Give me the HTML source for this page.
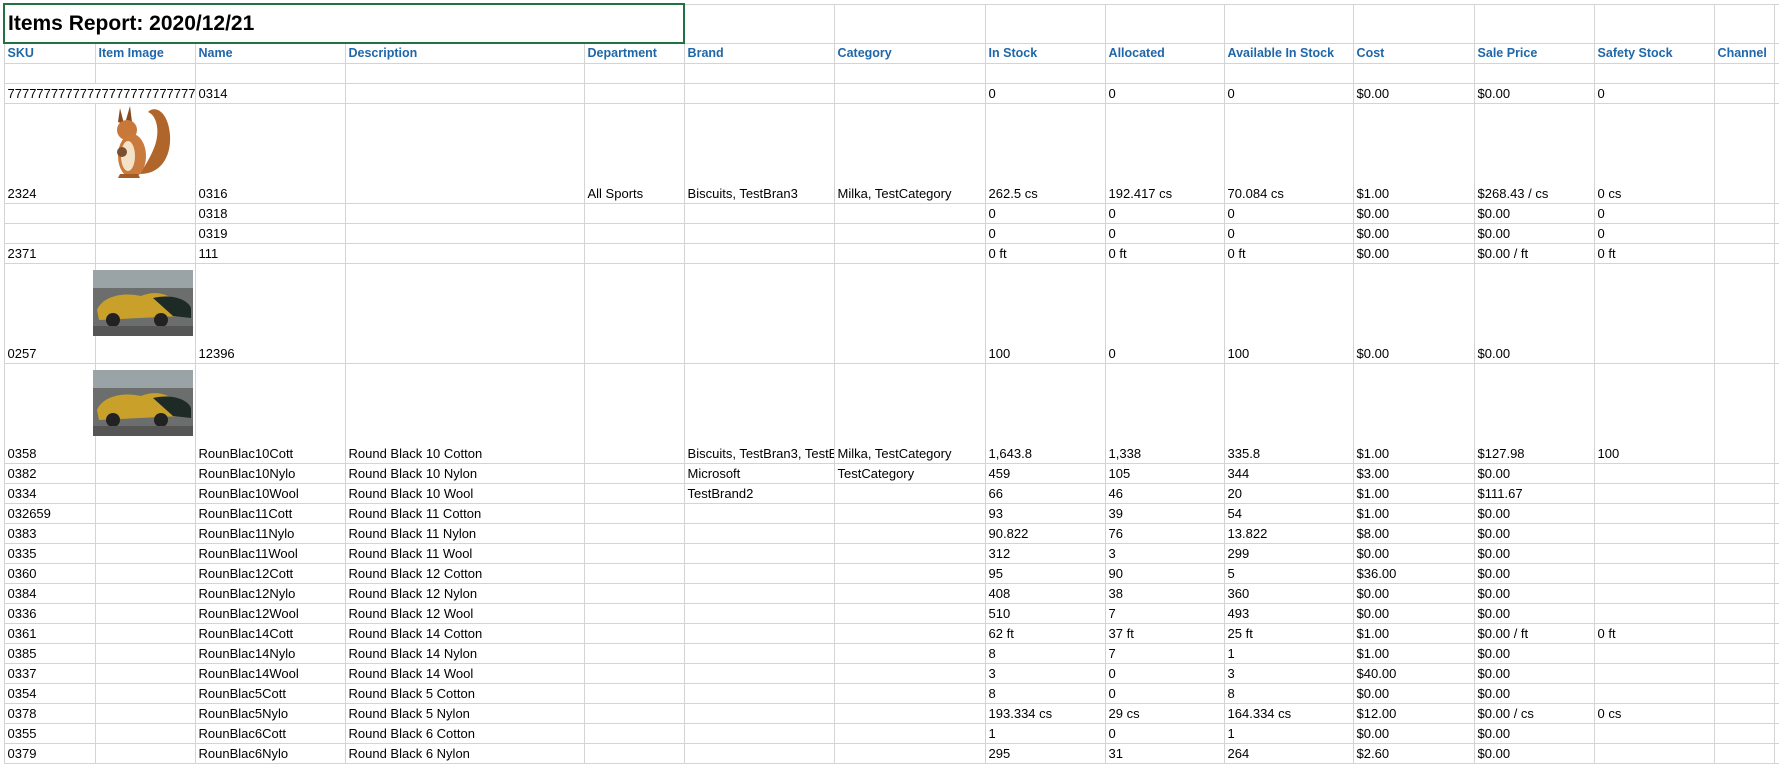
<!DOCTYPE html>
<html><head><meta charset="utf-8"><style>
html,body{margin:0;padding:0;background:#fff;width:1779px;height:759px;overflow:hidden}
table{position:absolute;left:3px;top:3px;width:1780px;border-collapse:collapse;table-layout:fixed;font-family:"Liberation Sans",sans-serif;font-size:13px;color:#000}
td{border:1px solid #d4d4d4;padding:0 0 2px 3px;height:17px;vertical-align:bottom;white-space:nowrap;overflow:hidden;line-height:15px}
tr.h td{color:#1f67a8;font-weight:bold;font-size:12.5px}
tr.t td{height:36px}
tr.b td{height:97px}
.title{border:2px solid #217346!important;font-weight:bold;font-size:21px;vertical-align:middle;padding:0 0 0 3px}
.img{position:absolute}
</style></head><body>
<table>
<colgroup><col style="width:91px"><col style="width:100px"><col style="width:150px"><col style="width:239px"><col style="width:100px"><col style="width:150px"><col style="width:151px"><col style="width:120px"><col style="width:119px"><col style="width:129px"><col style="width:121px"><col style="width:120px"><col style="width:120px"><col style="width:60px"><col style="width:10px"></colgroup>
<tr class="t"><td class="title" colspan="5">Items Report: 2020/12/21</td><td></td><td></td><td></td><td></td><td></td><td></td><td></td><td></td><td></td><td></td></tr>
<tr class="h"><td>SKU</td><td>Item Image</td><td>Name</td><td>Description</td><td>Department</td><td>Brand</td><td>Category</td><td>In Stock</td><td>Allocated</td><td>Available In Stock</td><td>Cost</td><td>Sale Price</td><td>Safety Stock</td><td>Channel</td><td></td></tr>
<tr><td></td><td></td><td></td><td></td><td></td><td></td><td></td><td></td><td></td><td></td><td></td><td></td><td></td><td></td><td></td></tr>
<tr><td colspan="2">77777777777777777777777777777</td><td>0314</td><td></td><td></td><td></td><td></td><td>0</td><td>0</td><td>0</td><td>$0.00</td><td>$0.00</td><td>0</td><td></td><td></td></tr>
<tr class="b"><td>2324</td><td></td><td>0316</td><td></td><td>All Sports</td><td>Biscuits, TestBran3</td><td>Milka, TestCategory</td><td>262.5 cs</td><td>192.417 cs</td><td>70.084 cs</td><td>$1.00</td><td>$268.43 / cs</td><td>0 cs</td><td></td><td></td></tr>
<tr><td></td><td></td><td>0318</td><td></td><td></td><td></td><td></td><td>0</td><td>0</td><td>0</td><td>$0.00</td><td>$0.00</td><td>0</td><td></td><td></td></tr>
<tr><td></td><td></td><td>0319</td><td></td><td></td><td></td><td></td><td>0</td><td>0</td><td>0</td><td>$0.00</td><td>$0.00</td><td>0</td><td></td><td></td></tr>
<tr><td>2371</td><td></td><td>111</td><td></td><td></td><td></td><td></td><td>0 ft</td><td>0 ft</td><td>0 ft</td><td>$0.00</td><td>$0.00 / ft</td><td>0 ft</td><td></td><td></td></tr>
<tr class="b"><td>0257</td><td></td><td>12396</td><td></td><td></td><td></td><td></td><td>100</td><td>0</td><td>100</td><td>$0.00</td><td>$0.00</td><td></td><td></td><td></td></tr>
<tr class="b"><td>0358</td><td></td><td>RounBlac10Cott</td><td>Round Black 10 Cotton</td><td></td><td>Biscuits, TestBran3, TestBrand2</td><td>Milka, TestCategory</td><td>1,643.8</td><td>1,338</td><td>335.8</td><td>$1.00</td><td>$127.98</td><td>100</td><td></td><td></td></tr>
<tr><td>0382</td><td></td><td>RounBlac10Nylo</td><td>Round Black 10 Nylon</td><td></td><td>Microsoft</td><td>TestCategory</td><td>459</td><td>105</td><td>344</td><td>$3.00</td><td>$0.00</td><td></td><td></td><td></td></tr>
<tr><td>0334</td><td></td><td>RounBlac10Wool</td><td>Round Black 10 Wool</td><td></td><td>TestBrand2</td><td></td><td>66</td><td>46</td><td>20</td><td>$1.00</td><td>$111.67</td><td></td><td></td><td></td></tr>
<tr><td>032659</td><td></td><td>RounBlac11Cott</td><td>Round Black 11 Cotton</td><td></td><td></td><td></td><td>93</td><td>39</td><td>54</td><td>$1.00</td><td>$0.00</td><td></td><td></td><td></td></tr>
<tr><td>0383</td><td></td><td>RounBlac11Nylo</td><td>Round Black 11 Nylon</td><td></td><td></td><td></td><td>90.822</td><td>76</td><td>13.822</td><td>$8.00</td><td>$0.00</td><td></td><td></td><td></td></tr>
<tr><td>0335</td><td></td><td>RounBlac11Wool</td><td>Round Black 11 Wool</td><td></td><td></td><td></td><td>312</td><td>3</td><td>299</td><td>$0.00</td><td>$0.00</td><td></td><td></td><td></td></tr>
<tr><td>0360</td><td></td><td>RounBlac12Cott</td><td>Round Black 12 Cotton</td><td></td><td></td><td></td><td>95</td><td>90</td><td>5</td><td>$36.00</td><td>$0.00</td><td></td><td></td><td></td></tr>
<tr><td>0384</td><td></td><td>RounBlac12Nylo</td><td>Round Black 12 Nylon</td><td></td><td></td><td></td><td>408</td><td>38</td><td>360</td><td>$0.00</td><td>$0.00</td><td></td><td></td><td></td></tr>
<tr><td>0336</td><td></td><td>RounBlac12Wool</td><td>Round Black 12 Wool</td><td></td><td></td><td></td><td>510</td><td>7</td><td>493</td><td>$0.00</td><td>$0.00</td><td></td><td></td><td></td></tr>
<tr><td>0361</td><td></td><td>RounBlac14Cott</td><td>Round Black 14 Cotton</td><td></td><td></td><td></td><td>62 ft</td><td>37 ft</td><td>25 ft</td><td>$1.00</td><td>$0.00 / ft</td><td>0 ft</td><td></td><td></td></tr>
<tr><td>0385</td><td></td><td>RounBlac14Nylo</td><td>Round Black 14 Nylon</td><td></td><td></td><td></td><td>8</td><td>7</td><td>1</td><td>$1.00</td><td>$0.00</td><td></td><td></td><td></td></tr>
<tr><td>0337</td><td></td><td>RounBlac14Wool</td><td>Round Black 14 Wool</td><td></td><td></td><td></td><td>3</td><td>0</td><td>3</td><td>$40.00</td><td>$0.00</td><td></td><td></td><td></td></tr>
<tr><td>0354</td><td></td><td>RounBlac5Cott</td><td>Round Black 5 Cotton</td><td></td><td></td><td></td><td>8</td><td>0</td><td>8</td><td>$0.00</td><td>$0.00</td><td></td><td></td><td></td></tr>
<tr><td>0378</td><td></td><td>RounBlac5Nylo</td><td>Round Black 5 Nylon</td><td></td><td></td><td></td><td>193.334 cs</td><td>29 cs</td><td>164.334 cs</td><td>$12.00</td><td>$0.00 / cs</td><td>0 cs</td><td></td><td></td></tr>
<tr><td>0355</td><td></td><td>RounBlac6Cott</td><td>Round Black 6 Cotton</td><td></td><td></td><td></td><td>1</td><td>0</td><td>1</td><td>$0.00</td><td>$0.00</td><td></td><td></td><td></td></tr>
<tr><td>0379</td><td></td><td>RounBlac6Nylo</td><td>Round Black 6 Nylon</td><td></td><td></td><td></td><td>295</td><td>31</td><td>264</td><td>$2.60</td><td>$0.00</td><td></td><td></td><td></td></tr>
</table>
<svg class="img" style="left:110px;top:104px" width="64" height="80" viewBox="0 0 64 80">
<path d="M30 70 C58 70 64 40 58 20 C54 6 44 2 38 8 C48 12 50 30 44 44 C40 54 36 60 30 70Z" fill="#b0652a"/>
<path d="M10 4 L14 20 L8 18Z M20 2 L22 18 L16 16Z" fill="#8a4a20"/>
<ellipse cx="17" cy="26" rx="10" ry="10" fill="#c87838"/>
<ellipse cx="22" cy="52" rx="14" ry="22" fill="#c97a3c"/>
<ellipse cx="18" cy="52" rx="7" ry="15" fill="#f3e2c8"/>
<ellipse cx="12" cy="48" rx="5" ry="5" fill="#7a5030"/>
<path d="M8 74 L30 74 L28 70 L10 70Z" fill="#a35a24"/>
</svg>
<svg class="img" style="left:93px;top:270px" width="100" height="66" viewBox="0 0 100 66">
<rect width="100" height="66" fill="#6b6e6c"/><rect width="100" height="18" fill="#9aa3a6"/>
<path d="M4 40 C10 26 30 22 48 26 C62 20 78 24 84 34 L88 46 L6 50Z" fill="#c9a02a"/>
<path d="M60 28 C76 24 94 28 98 38 L98 48 L80 46Z" fill="#1e2a26"/>
<circle cx="20" cy="50" r="7" fill="#222"/><circle cx="68" cy="50" r="7" fill="#222"/>
<rect y="56" width="100" height="10" fill="#555"/>
</svg>
<svg class="img" style="left:93px;top:370px" width="100" height="66" viewBox="0 0 100 66">
<rect width="100" height="66" fill="#6b6e6c"/><rect width="100" height="18" fill="#9aa3a6"/>
<path d="M4 40 C10 26 30 22 48 26 C62 20 78 24 84 34 L88 46 L6 50Z" fill="#c9a02a"/>
<path d="M60 28 C76 24 94 28 98 38 L98 48 L80 46Z" fill="#1e2a26"/>
<circle cx="20" cy="50" r="7" fill="#222"/><circle cx="68" cy="50" r="7" fill="#222"/>
<rect y="56" width="100" height="10" fill="#555"/>
</svg>
</body></html>
